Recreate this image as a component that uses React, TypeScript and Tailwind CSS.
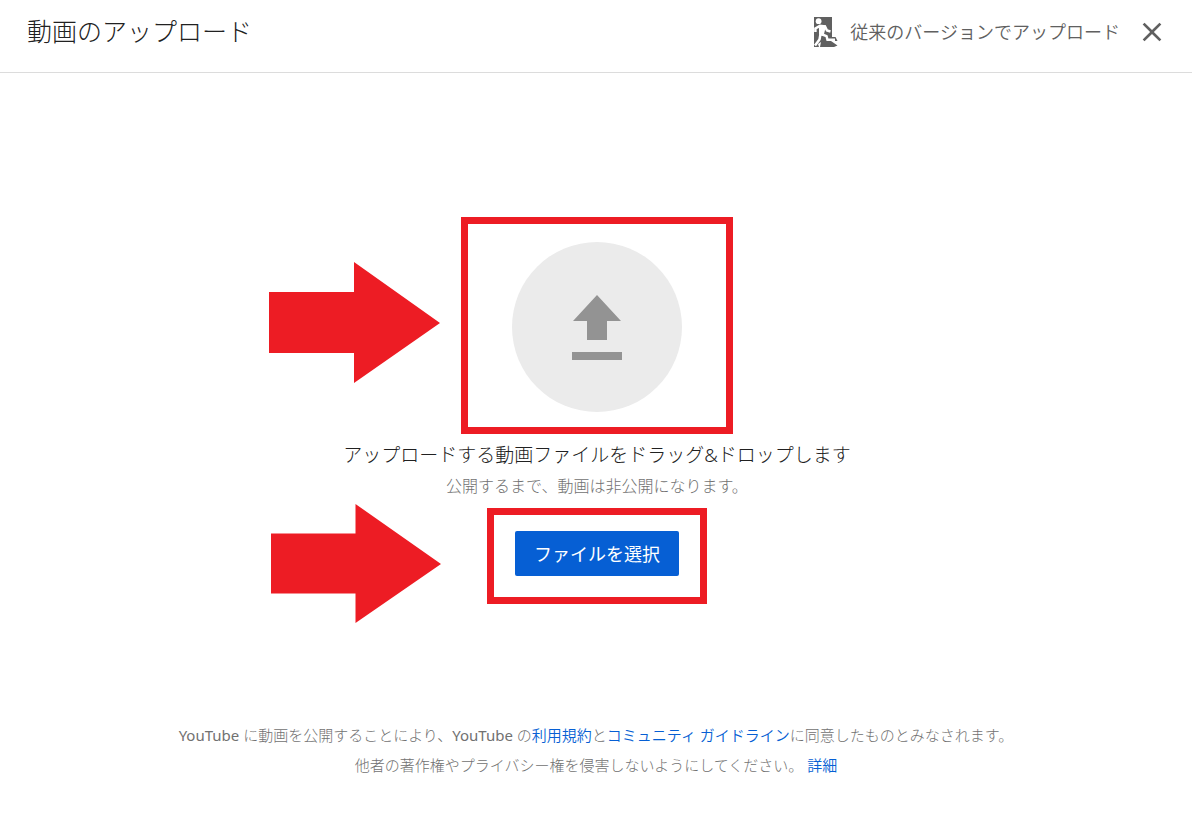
import { MdClose } from "react-icons/md";

const links = {
	terms: "https://www.youtube.com/t/terms",
	guidelines: "https://www.youtube.com/t/community_guidelines",
	details: "https://support.google.com/youtube",
};

function ExitIcon() {
	return (
		<svg viewBox="0 0 24 30" className="h-[30px] w-6" aria-hidden="true">
			<path
				d="M0 0H18V20H21.5L23.5 24H17L23.5 28.5L20 30H6L7 25L4 27L5 30H0Z"
				fill="#606060"
			/>
			<circle cx="4.6" cy="4.2" r="2.9" fill="#fff" />
			<path d="M5 8L12 8.5L11 13L9.5 19L5 17.5Z" fill="#fff" />
			<path
				d="M1.4 15V11.5L6 8.8L11 9.5L13 13.5L16.5 14.5M7 17L12.5 19.2L13.5 22.8H21M6.5 17L5.5 22.5L1 28.5"
				fill="none"
				stroke="#fff"
				strokeWidth="2.5"
			/>
		</svg>
	);
}

function UploadIcon() {
	return (
		<svg viewBox="0 0 50 65" className="h-[65px] w-[50px]" aria-hidden="true">
			<path d="M25 0L49 26H35V45H15V26H1Z" fill="#939393" />
			<path d="M0 57H50V65H0Z" fill="#939393" />
		</svg>
	);
}

function Arrow({ className }: { className: string }) {
	return (
		<svg
			viewBox="0 0 171 121"
			preserveAspectRatio="none"
			className={`absolute right-full ${className}`}
			aria-hidden="true"
		>
			<path d="M0 30H85V0L171 61L85 121V91H0Z" fill="#ed1c24" />
		</svg>
	);
}

export default function App() {
	return (
		<div
			lang="ja"
			className="flex min-h-screen flex-col bg-white font-['Noto_Sans','Noto_Sans_CJK_JP',sans-serif] font-light text-[#717171]"
		>
			<header className="flex h-[73px] items-center justify-between border-b border-[#dcdcdc] pr-6 pb-[9px] pl-[27px]">
				<h1 className="text-[25px] text-[#212121]">動画のアップロード</h1>
				<div className="flex items-center gap-4 text-[#606060]">
					<button
						type="button"
						className="flex items-center gap-3 text-lg font-[350]"
					>
						<ExitIcon />
						従来のバージョンでアップロード
					</button>
					<button type="button" aria-label="閉じる">
						<MdClose size={32} />
					</button>
				</div>
			</header>

			<main className="flex grow flex-col items-center pt-36 pl-0.5">
				<div className="relative border-[7px] border-[#ed1c24] px-11 pt-[18px] pb-[15px]">
					<Arrow className="top-[38px] mr-7 h-[121px] w-[171px]" />
					<div className="flex size-[170px] items-center justify-center rounded-full bg-[#ebebeb]">
						<UploadIcon />
					</div>
				</div>

				<h2 className="mt-1.5 text-[19px] leading-[30px] text-[#212121]">
					アップロードする動画ファイルをドラッグ&amp;ドロップします
				</h2>
				<p className="text-base leading-8">
					公開するまで、動画は非公開になります。
				</p>

				<div className="relative mt-1.5 border-[7px] border-[#ed1c24] px-[21px] pt-4 pb-[21px]">
					<Arrow className="-top-[11px] mr-[53px] h-[119px] w-[170px]" />
					<button
						type="button"
						className="h-[45px] w-[164px] rounded-xs bg-[#065fd4] text-lg font-normal text-white"
					>
						ファイルを選択
					</button>
				</div>
			</main>

			<footer className="pb-[35px] text-center text-[15px] leading-[30px]">
				<p>
					<span className="font-normal">YouTube </span>
					に動画を公開することにより、
					<span className="font-normal">YouTube </span>の
					<a href={links.terms} className="font-[350] text-[#065fd4]">
						利用規約
					</a>
					と
					<a href={links.guidelines} className="font-[350] text-[#065fd4]">
						コミュニティ ガイドライン
					</a>
					に同意したものとみなされます。
				</p>
				<p>
					他者の著作権やプライバシー権を侵害しないようにしてください。{" "}
					<a href={links.details} className="font-[350] text-[#065fd4]">
						詳細
					</a>
				</p>
			</footer>
		</div>
	);
}
